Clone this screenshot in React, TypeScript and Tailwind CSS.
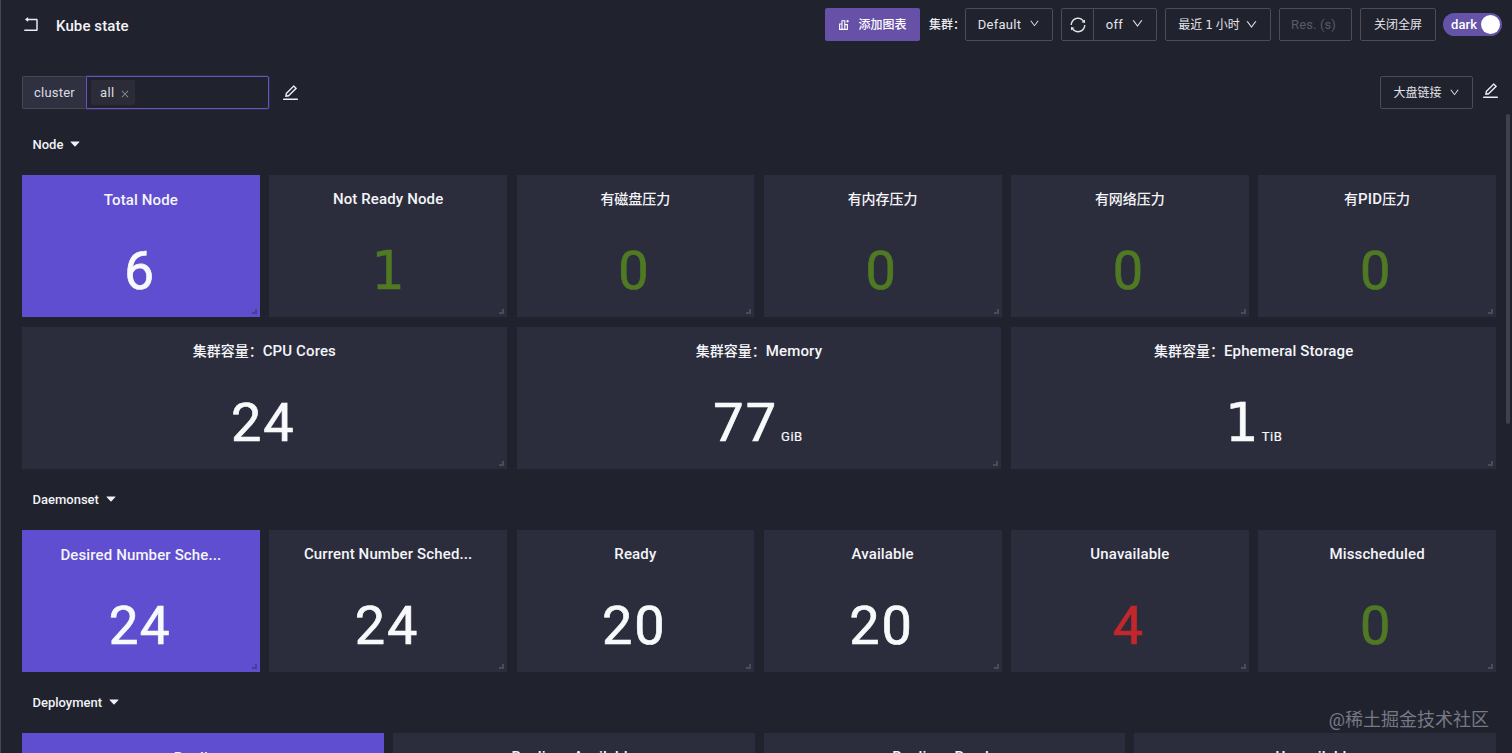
import type { ReactNode } from 'react';
import {
  AiFillCaretDown,
  AiOutlineClose,
  AiOutlineDown,
  AiOutlineEdit,
  AiOutlineRollback,
  AiOutlineSync,
} from 'react-icons/ai';

type Tone = 'white' | 'green' | 'red';

interface Stat {
  title: string;
  value?: string;
  unit?: string;
  tone?: Tone;
  active?: boolean;
}

const toneClass: Record<Tone, string> = {
  white: 'text-[#f8f9fb]',
  green: 'text-[#4f7a23]',
  red: 'text-[#c1272b]',
};

const nodeStats: Stat[] = [
  { title: 'Total Node', value: '6', active: true },
  { title: 'Not Ready Node', value: '1', tone: 'green' },
  { title: '有磁盘压力', value: '0', tone: 'green' },
  { title: '有内存压力', value: '0', tone: 'green' },
  { title: '有网络压力', value: '0', tone: 'green' },
  { title: '有PID压力', value: '0', tone: 'green' },
];

const capacityStats: Stat[] = [
  { title: '集群容量：CPU Cores', value: '24' },
  { title: '集群容量：Memory', value: '77', unit: 'GiB' },
  { title: '集群容量：Ephemeral Storage', value: '1', unit: 'TiB' },
];

const daemonsetStats: Stat[] = [
  { title: 'Desired Number Sche...', value: '24', active: true },
  { title: 'Current Number Sched...', value: '24' },
  { title: 'Ready', value: '20' },
  { title: 'Available', value: '20' },
  { title: 'Unavailable', value: '4', tone: 'red' },
  { title: 'Misscheduled', value: '0', tone: 'green' },
];

const deploymentStats: Stat[] = [
  { title: 'Replicas', active: true },
  { title: 'Replicas Available' },
  { title: 'Replicas Ready' },
  { title: 'Unavailable' },
];

// Latin runs are set one pixel larger than the Chinese text around them.
function MixedText({ text }: { text: string }) {
  return text
    .split(/([\x20-\x7e]+)/)
    .filter(Boolean)
    .map((run, i) => (
      <span key={i} className={/^[\x20-\x7e]/.test(run) ? 'text-[15px] tracking-[0.13px]' : 'text-sm leading-6'}>
        {run}
      </span>
    ));
}

function StatCard({ title, value, unit, tone = 'white', active }: Stat) {
  const digits =
    value === '1'
      ? "pl-0.5 font-['DejaVu_Sans'] text-[53px] [-webkit-text-stroke:0.4px]"
      : active
        ? 'text-[53px] tracking-[1.3px] [-webkit-text-stroke:0.7px]'
        : 'text-[54px] tracking-[2px] [-webkit-text-stroke:0.7px]';
  return (
    <div
      className={`relative flex h-[142px] flex-col items-center ${active ? 'bg-[#604ed0] pt-px' : 'bg-[#2c2d3c]'}`}
    >
      <div className="mt-3 h-6 leading-6 font-medium whitespace-nowrap text-[#f4f5f9]">
        <MixedText text={title} />
      </div>
      {value && (
        <div
          className={`-ml-0.5 flex items-baseline leading-[64px] ${active ? 'mt-[27px]' : 'mt-[28px]'} ${toneClass[tone]}`}
        >
          <span className={digits}>{value}</span>
          {unit && (
            <span className="mt-px ml-[3px] text-[13px] tracking-[0.5px] [-webkit-text-stroke:0.2px]">{unit}</span>
          )}
        </div>
      )}
      <span
        className={`absolute right-[3px] bottom-[3px] size-[5px] border-r-2 border-b-2 ${
          active ? 'border-[#46418c]' : 'border-[#4b4c59]'
        }`}
      />
    </div>
  );
}

function SectionTitle({ children }: { children: ReactNode }) {
  return (
    <div className="flex h-[61px] items-center gap-1.5 pl-[10.5px] text-[13px] font-medium text-[#f1f2f6]">
      {children}
      <AiFillCaretDown className="-mt-px h-3.5 w-3 scale-x-110" />
    </div>
  );
}

function Control({ className, children }: { className: string; children: ReactNode }) {
  return (
    <div
      className={`flex h-[33px] shrink-0 items-center justify-center rounded-[2px] border border-[#4b4c58] text-[13px] tracking-[0.3px] whitespace-nowrap text-[#e3e4ea] ${className}`}
    >
      {children}
    </div>
  );
}

function AddChartIcon() {
  return (
    <svg viewBox="0 0 12 12" className="size-3" fill="none" stroke="currentColor" strokeWidth="1.1">
      <path d="M4 10.4H1.6V5H4M4 10.4V1.8h2.8v8.6M6.8 5.6h2.6v4.8M1.3 10.4h8.4" />
      <path d="M9.6 1v2.6M8.3 2.3h2.6" />
    </svg>
  );
}

export default function App() {
  return (
    <div className="relative flex h-[753px] w-full flex-col overflow-hidden border-l border-[#464751] bg-[#20222d] pl-[21px] font-['Roboto','Noto_Sans_CJK_SC',sans-serif]">
      <header className="flex h-[49px] shrink-0 items-center pr-[10px] text-[#eceef3]">
        <AiOutlineRollback className="-mt-0.5 -ml-px size-5" />
        <h1 className="mt-[3px] ml-[15px] text-[15px] font-medium tracking-[0.1px] text-[#f3f4f8]">Kube state</h1>
        <div className="ml-auto flex items-center">
          <button className="flex h-[33px] w-[95px] items-center justify-center gap-2 rounded-[2px] bg-[#6650a8] text-xs font-medium text-white">
            <AddChartIcon />
            添加图表
          </button>
          <span className="ml-[9px] w-[36px] text-xs font-medium whitespace-nowrap">集群：</span>
          <Control className="w-[88px] gap-2">
            Default
            <AiOutlineDown className="-mt-0.5 size-[11px]" />
          </Control>
          <Control className="ml-2 w-[33px] rounded-r-none">
            <AiOutlineSync className="size-[18px]" />
          </Control>
          <Control className="-ml-px w-[64px] gap-2 rounded-l-none">
            off
            <AiOutlineDown className="-mt-0.5 size-[13px]" />
          </Control>
          <Control className="ml-2 w-[106px] gap-[5px]">
            <span className="text-xs tracking-normal">
              最近 <span className="font-['DejaVu_Sans']">1</span> 小时
            </span>
            <AiOutlineDown className="size-[13px]" />
          </Control>
          <Control className="ml-2 w-[73px] pr-1">
            <span className="tracking-[0.1px] text-[#5a5b66]">Res. (s)</span>
          </Control>
          <Control className="ml-2 w-[76px]">
            <span className="text-xs tracking-normal">关闭全屏</span>
          </Control>
          <div className="ml-[7px] flex h-[23px] w-[59px] items-center justify-between rounded-full bg-[#6453a6] pr-0.5 pl-2 text-[13px] font-medium tracking-[0.1px] text-white">
            dark
            <span className="size-[19px] rounded-full bg-white" />
          </div>
        </div>
      </header>

      <div className="mt-[27px] flex h-[33px] shrink-0 items-center pr-[12px] text-[#eceef3]">
        <div className="flex h-[33px] w-[64px] items-center justify-center rounded-l-[2px] border border-r-0 border-[#464753] bg-[#303140] text-[13px] tracking-[0.2px] text-[#dcdde4]">
          cluster
        </div>
        <div className="flex h-[33px] w-[183px] items-center rounded-r-[2px] border border-[#6a55b4] px-1 shadow-[0_0_0_1px_#2e2c55]">
          <span className="flex h-[25px] w-11 items-center gap-[5px] rounded-[2px] bg-[#2b2c37] pl-[9px] text-[13px] tracking-[0.4px] text-[#dcdde4]">
            all
            <AiOutlineClose className="mt-0.5 size-2.5 text-[#9293a0]" />
          </span>
        </div>
        <AiOutlineEdit className="ml-3 size-[19px]" />
        <Control className="ml-auto w-[93px] gap-[7px]">
          <span className="text-xs tracking-normal">大盘链接</span>
          <AiOutlineDown className="size-[11px]" />
        </Control>
        <AiOutlineEdit className="-mt-1 ml-2 size-[19px]" />
      </div>

      <main className="mt-[5px] shrink-0 pr-4">
        <SectionTitle>Node</SectionTitle>
        <div className="grid grid-cols-6 gap-[9.5px]">
          {nodeStats.map((s) => (
            <StatCard key={s.title} {...s} />
          ))}
        </div>
        <div className="mt-2.5 grid grid-cols-3 gap-[10px]">
          {capacityStats.map((s) => (
            <StatCard key={s.title} {...s} />
          ))}
        </div>
        <SectionTitle>Daemonset</SectionTitle>
        <div className="grid grid-cols-6 gap-[9.5px]">
          {daemonsetStats.map((s) => (
            <StatCard key={s.title} {...s} />
          ))}
        </div>
        <SectionTitle>Deployment</SectionTitle>
        <div className="grid grid-cols-4 gap-[9px]">
          {deploymentStats.map((s) => (
            <StatCard key={s.title} {...s} />
          ))}
        </div>
      </main>

      <div className="absolute top-[114px] right-0.5 h-[310px] w-1 rounded-full bg-[#40414c]" />
      <div className="absolute right-[23px] bottom-[21px] text-[18px] leading-6 whitespace-nowrap text-[#777985]">
        @稀土掘金技术社区
      </div>
    </div>
  );
}
